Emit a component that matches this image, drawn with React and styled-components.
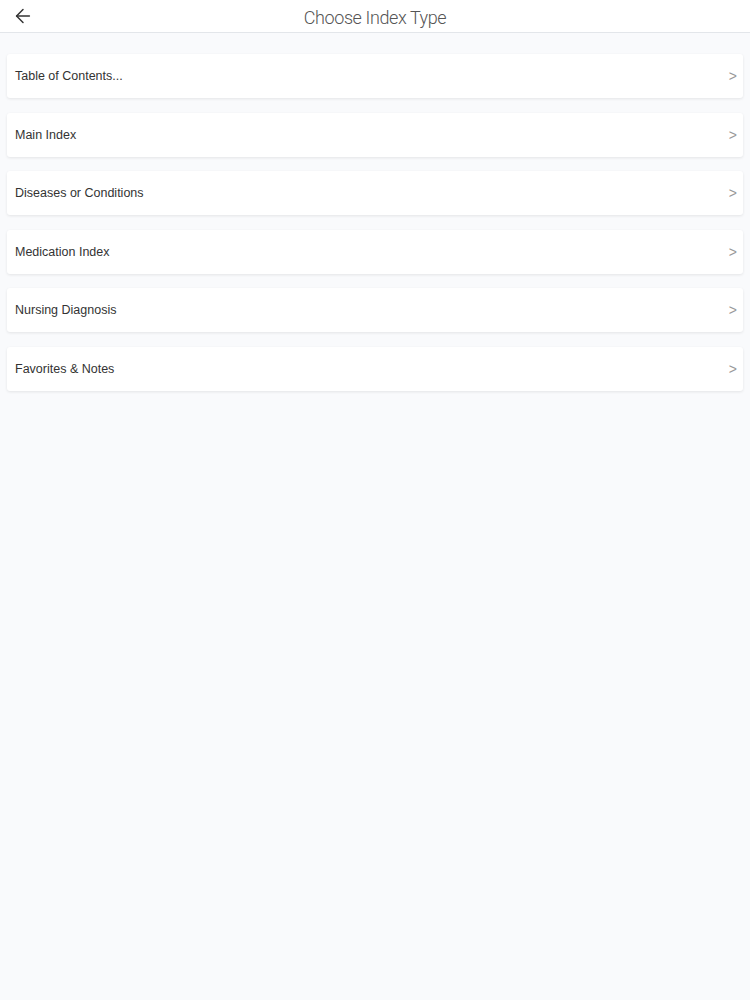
import { ArrowLeft } from "lucide-react";
import styled, { createGlobalStyle } from "styled-components";

const GlobalStyle = createGlobalStyle`
  html, body {
    margin: 0;
    padding: 0;
    background-color: #f9fafc;
    font-family: "Helvetica Neue", "Liberation Sans", Arial, sans-serif;
  }
`;

const Page = styled.div`
  min-height: 1000px;
  background-color: #f9fafc;
`;

const Header = styled.header`
  position: relative;
  display: flex;
  justify-content: center;
  align-items: center;
  height: 32px;
  background-color: #ffffff;
  border-bottom: 1px solid #e3e6ea;
`;

const BackButton = styled.button`
  position: absolute;
  left: 12px;
  top: 50%;
  transform: translateY(-50%);
  display: flex;
  padding: 0;
  border: none;
  background: none;
  color: #333;
  cursor: pointer;
`;

const Title = styled.h1`
  margin: 2px 0 0;
  font-family: Roboto, "Liberation Sans", sans-serif;
  font-size: 18px;
  font-weight: 300;
  color: #555;
  letter-spacing: -0.4px;
`;

const List = styled.main`
  display: flex;
  flex-direction: column;
  gap: 14.6px;
  padding: 21px 7px;
`;

const Row = styled.div`
  display: flex;
  justify-content: space-between;
  align-items: center;
  height: 44px;
  padding: 0 6px 0 8px;
  background-color: #ffffff;
  border-radius: 3px;
  box-shadow: 0 1px 3px rgba(0, 0, 0, 0.09);
  cursor: pointer;
`;

const Label = styled.span`
  font-size: 12.5px;
  color: #333;
`;

const Chevron = styled.span`
  font-size: 14px;
  color: #999;
`;

const items = [
  "Table of Contents...",
  "Main Index",
  "Diseases or Conditions",
  "Medication Index",
  "Nursing Diagnosis",
  "Favorites & Notes",
];

export default function App() {
  return (
    <Page>
      <GlobalStyle />
      <Header>
        <BackButton aria-label="back">
          <ArrowLeft size={22} strokeWidth={1.6} />
        </BackButton>
        <Title>Choose Index Type</Title>
      </Header>
      <List>
        {items.map((item) => (
          <Row key={item}>
            <Label>{item}</Label>
            <Chevron>&gt;</Chevron>
          </Row>
        ))}
      </List>
    </Page>
  );
}
